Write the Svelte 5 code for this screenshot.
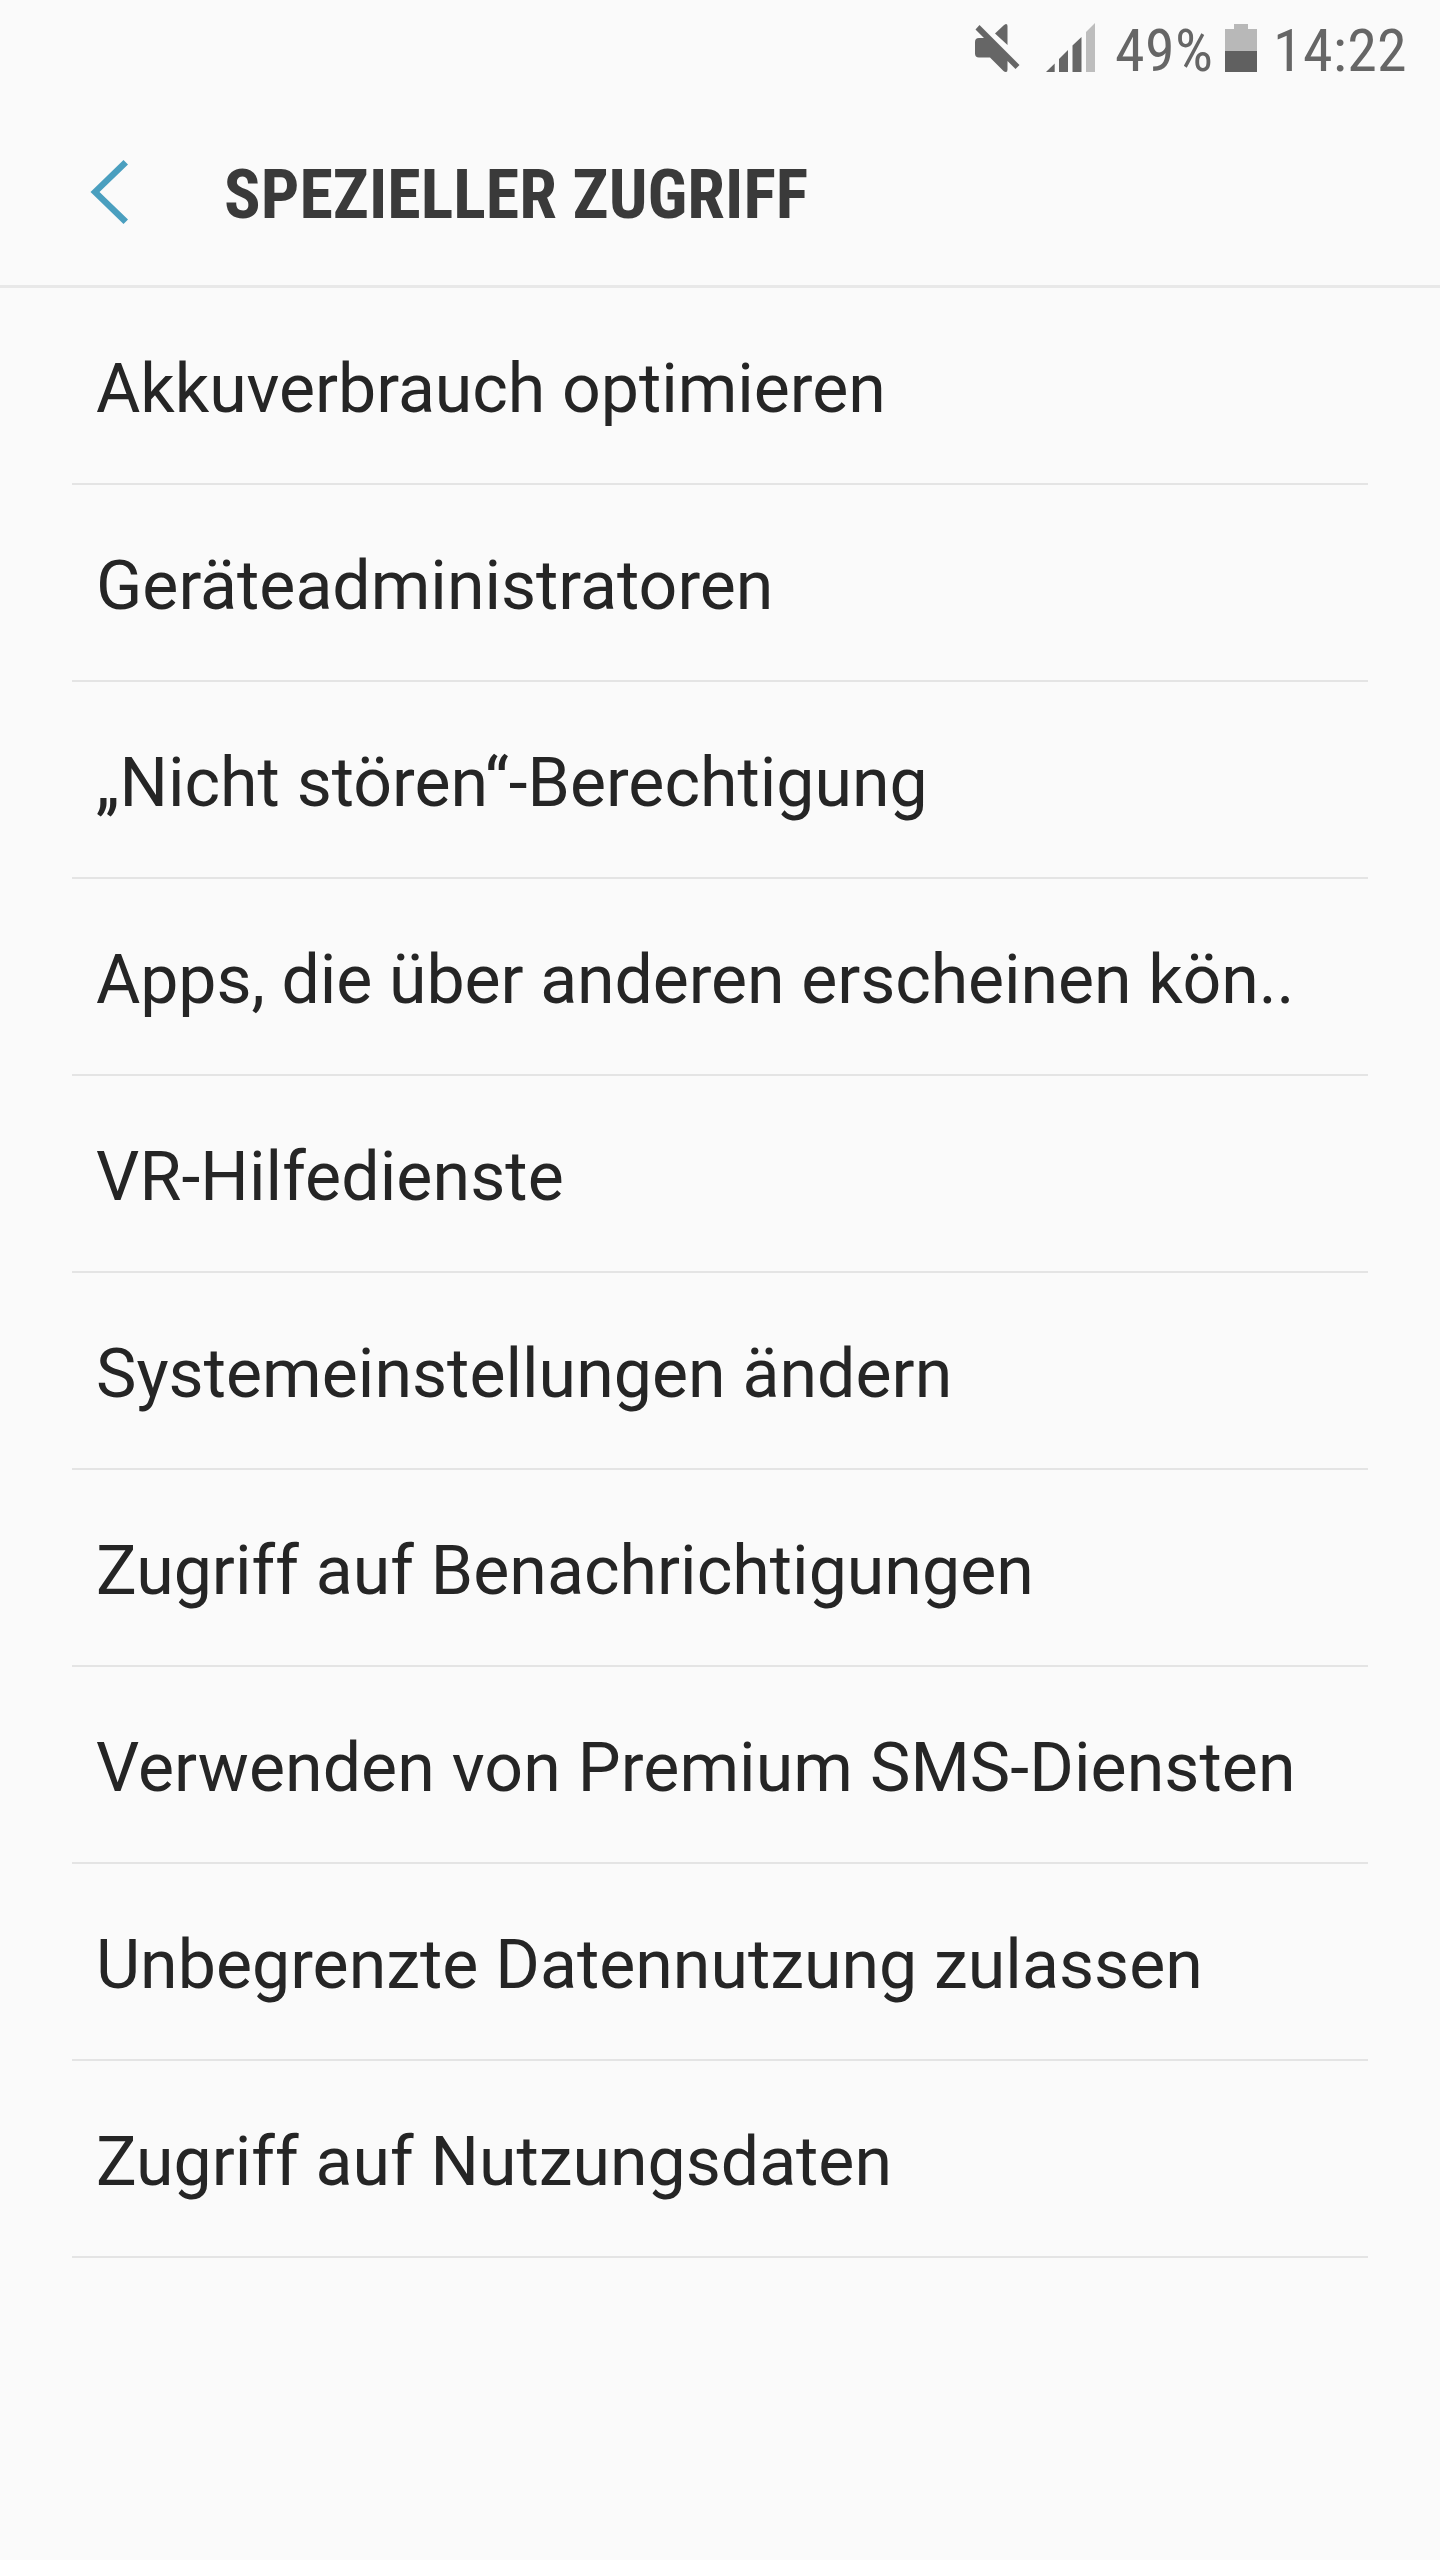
<script>
  // tracking: letter-spacing in px, fine-tuned for each label
  const items = [
    { label: 'Akkuverbrauch optimieren', tracking: -0.04 },
    { label: 'Geräteadministratoren', tracking: 0 },
    { label: '„Nicht stören“-Berechtigung', tracking: 0 },
    { label: 'Apps, die über anderen erscheinen kön..', tracking: -0.09 },
    { label: 'VR-Hilfedienste', tracking: 0.1 },
    { label: 'Systemeinstellungen ändern', tracking: 0.03 },
    { label: 'Zugriff auf Benachrichtigungen', tracking: 0.03 },
    { label: 'Verwenden von Premium SMS-Diensten', tracking: 0.08 },
    { label: 'Unbegrenzte Datennutzung zulassen', tracking: 0.02 },
    { label: 'Zugriff auf Nutzungsdaten', tracking: 0 },
  ];
</script>

<div class="screen">
  <div class="status">
    <svg class="mute" width="45" height="50" viewBox="0 0 45 50" fill="#666">
      <path d="M0 18Q0 14 4 14H9L0.5 5.5L4.5 1L44.5 41L40.5 45L32.5 37V45.5Q32.5 48 31 48Q29.5 48 28.5 47L15 33.5H4Q0 33.5 0 29.5Z" />
      <path d="M20 9.5L28.5 1.5Q30 0 31 0Q32.5 0 32.5 2V21Z" />
    </svg>
    <svg class="signal" width="49" height="49" viewBox="0 0 49 49" fill="#666">
      <path d="M0 49L8.7 40.5V49Z" />
      <path d="M13 49V36L22 27V49Z" />
      <path d="M26.5 49V22.5L35.5 14V49Z" />
      <path fill="#bdbdbd" d="M40 49V9L49 0V49Z" />
    </svg>
    <span class="percent">49%</span>
    <svg class="battery" width="32" height="48" viewBox="0 0 32 48">
      <path fill="#b8b8b8" d="M9 0H23V5H32V27H0V5H9Z" />
      <path fill="#606060" d="M0 27H32V48H0Z" />
    </svg>
    <span class="clock">14:22</span>
  </div>

  <header>
    <svg width="38" height="64" viewBox="0 0 38 64">
      <path fill="#4a9fbf" d="M33.5 0L38 4.5L9.5 32L38 59.5L33.5 64L0.5 32Z" />
    </svg>
    <h1>SPEZIELLER ZUGRIFF</h1>
  </header>

  <ul>
    {#each items as item}
      <li style:letter-spacing="{item.tracking}px">{item.label}</li>
    {/each}
  </ul>
</div>

<style>
  :global(body) {
    margin: 0;
    background: #fafafa;
  }
  .screen {
    width: 1440px;
    height: 2560px;
    background: #fafafa;
    font-family: Roboto, sans-serif;
    overflow: hidden;
  }
  .status {
    height: 96px;
    box-sizing: border-box;
    padding-left: 975px;
    display: flex;
    align-items: flex-start;
    color: #666;
    font-family: 'Roboto Condensed', Roboto, sans-serif;
    font-stretch: 75%;
    font-size: 60px;
    line-height: 71px;
    white-space: nowrap;
  }
  svg {
    display: block;
    flex: none;
  }
  .mute { margin-top: 24px; }
  .signal { margin: 23px 0 0 26px; }
  .percent { margin: 15px 0 0 20px; width: 110px; letter-spacing: 0.4px; }
  .battery { margin-top: 24px; }
  .clock { margin: 15px 0 0 16px; letter-spacing: 0.3px; }
  header {
    height: 192px;
    box-sizing: border-box;
    border-bottom: 3px solid #e8e8e8;
    padding: 64px 0 0 90px;
    display: flex;
    align-items: flex-start;
    gap: 96px;
  }
  h1 {
    margin: -5px 0 0;
    padding-top: 0;
    color: #3a3a3a;
    font-family: 'Roboto Condensed', Roboto, sans-serif;
    font-stretch: 75%;
    font-size: 68px;
    line-height: 80px;
    font-weight: 700;
    letter-spacing: 0.03px;
    white-space: nowrap;
  }
  ul {
    list-style: none;
    margin: 0 72px;
    padding: 0;
  }
  li {
    height: 197px;
    box-sizing: border-box;
    border-bottom: 2px solid #e4e4e4;
    padding: 61px 0 0 24px;
    color: #252525;
    font-size: 68px;
    line-height: 80px;
    white-space: nowrap;
  }
</style>
